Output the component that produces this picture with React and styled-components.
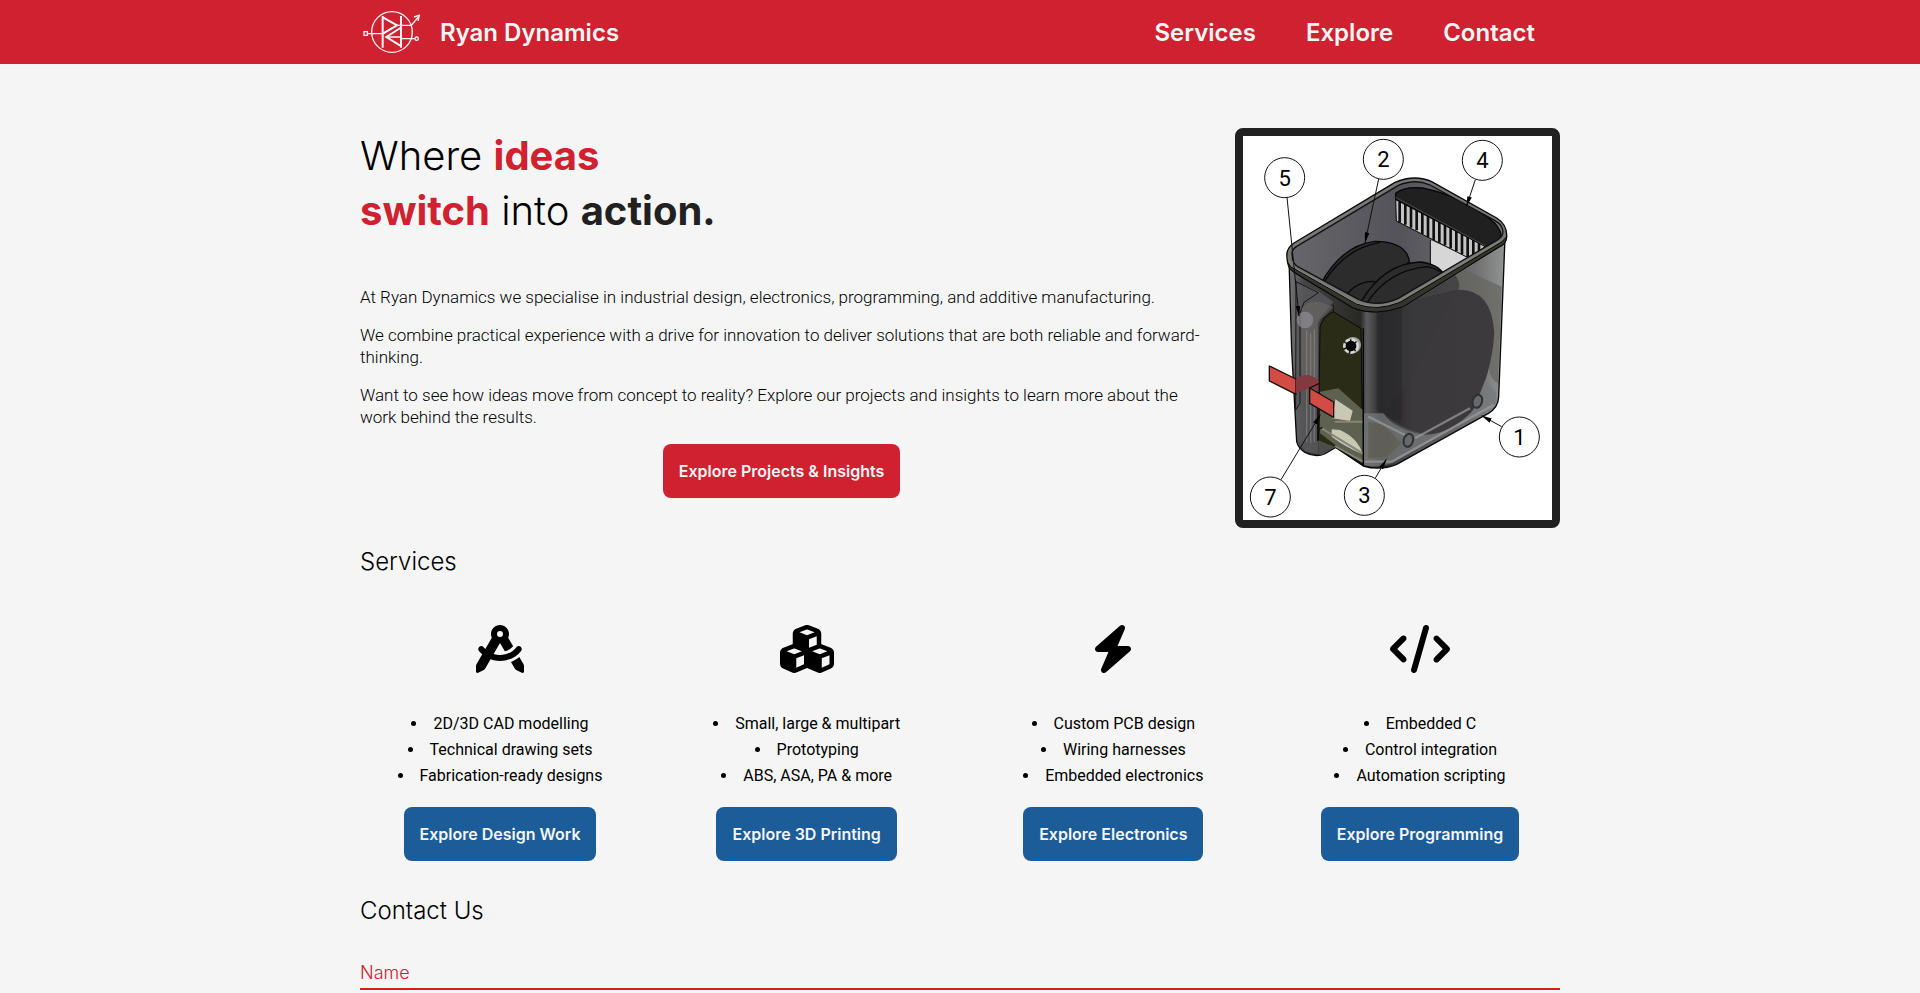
import React from "react";
import styled, { createGlobalStyle } from "styled-components";
import { FaCompassDrafting, FaCubes, FaBolt, FaCode } from "react-icons/fa6";

const GlobalStyle = createGlobalStyle`
  * { box-sizing: border-box; }
  body {
    margin: 0;
    background: #f5f5f5;
    color: #000;
    font-family: Inter, "Liberation Sans", sans-serif;
    font-size: 16px;
    line-height: 22px;
  }
`;

const Header = styled.header`
  background: #cf2130;
`;

const Container = styled.div`
  width: 100%;
  max-width: 1200px;
  margin: 0 auto;
`;

const Bar = styled(Container)`
  display: flex;
  align-items: center;
  justify-content: space-between;
  height: 64px;
`;

const Brand = styled.a`
  display: flex;
  align-items: center;
  gap: 16px;
  color: #f5f5f5;
  font-size: 24px;
  font-weight: 600;
  line-height: 35px;
  text-decoration: none;
`;

const Nav = styled.nav`
  display: flex;
`;

const NavLink = styled.a`
  padding: 0 25px;
  color: #f5f5f5;
  font-size: 24px;
  font-weight: 600;
  line-height: 35px;
  text-decoration: none;
`;

const Hero = styled.section`
  display: flex;
  gap: 32px;
  margin-top: 64px;
`;

const HeroText = styled.div`
  display: flex;
  flex: 1;
  flex-direction: column;
`;

const Title = styled.h1`
  margin: 0 0 48px;
  font-size: 40px;
  font-weight: 300;
  line-height: 55px;
`;

const Strong = styled.strong`
  color: ${(p) => (p.$red ? "#cf2130" : "#212121")};
  font-weight: 700;
`;

const Paragraph = styled.p`
  margin: 0 0 16px;
  font-family: Roboto, Inter, sans-serif;
  font-size: 17px;
  font-weight: 300;
`;

const ActionLink = styled.a`
  align-self: center;
  padding: 16px;
  border-radius: 8px;
  background: ${(p) => (p.$red ? "#cf2130" : "#1c5c99")};
  color: #f5f5f5;
  font-weight: 600;
  text-decoration: none;
`;

const Picture = styled.div`
  width: 325px;
  height: 400px;
  border: 8px solid #212121;
  border-radius: 8px;
  background: #fff;

  svg {
    display: block;
    width: 100%;
    height: 100%;
  }
`;

const Heading = styled.h2`
  margin: ${(p) => p.$top}px 0 0;
  font-size: 24px;
  font-weight: 300;
  line-height: 35px;
`;

const Services = styled.section`
  display: flex;
  justify-content: space-between;
  margin-top: 46px;
`;

const Service = styled.article`
  display: flex;
  flex-direction: column;
  align-items: center;
  width: 280px;

  > svg {
    width: 60px;
    height: 48px;
  }
`;

const List = styled.ul`
  width: 100%;
  margin: 40px 0 16px;
  padding: 0;
  font-family: Roboto, Inter, sans-serif;
  list-style-position: inside;
  text-align: center;
`;

const Item = styled.li`
  padding-bottom: 4px;
`;

const Form = styled.form`
  margin-top: 30px;
`;

const Field = styled.input`
  display: block;
  width: 100%;
  height: 32px;
  padding: 0 0 2px;
  border: 0;
  border-bottom: 2px solid #d81e1a;
  background: transparent;
  color: #212121;
  font: inherit;
  font-size: 18px;
  font-weight: 300;

  &::placeholder {
    color: #cf2130;
    opacity: 1;
  }
`;

const Logo = () => (
  <svg width="64" height="48" viewBox="0 0 192 144" fill="none" stroke="#f5f5f5" aria-hidden="true">
    <circle cx="96" cy="72" r="61" strokeWidth="4" />
    <path d="M68 24V119M123 24V119M70 29L111 52L70 76M121 60L79 87L121 113" strokeWidth="6" />
    <path d="M12 71h10v11H12zM23 77H68M111 52H154L175 27M123 92H164M70 76L96 60M79 87H121" strokeWidth="4" />
    <path d="M162 27L178 22L174 39" strokeWidth="4" />
    <circle cx="170" cy="92" r="5" strokeWidth="4" />
  </svg>
);

const balloons = [
  { n: 5, x: 179, y: 173, from: [186, 232], to: [222, 588] },
  { n: 2, x: 475, y: 118, from: [461, 177], to: [420, 368] },
  { n: 4, x: 772, y: 121, from: [751, 179], to: [724, 260] },
  { n: 1, x: 883, y: 951, from: [830, 920], to: [770, 887] },
  { n: 3, x: 418, y: 1126, from: [450, 1076], to: [484, 1018] },
  { n: 7, x: 136, y: 1131, from: [168, 1079], to: [286, 884] },
];

const Dryer = () => (
  <svg viewBox="54 48 927 1152" role="img" aria-label="Numbered drawing of a filament dry box" strokeLinejoin="round">
    <defs>
      <linearGradient id="wall" x1="0" x2="1">
        <stop offset="0" stopColor="#777779" />
        <stop offset="0.07" stopColor="#444346" />
        <stop offset="0.33" stopColor="#282824" />
        <stop offset="0.36" stopColor="#5b5a5d" />
        <stop offset="0.43" stopColor="#29282b" />
        <stop offset="0.5" stopColor="#454448" />
        <stop offset="0.86" stopColor="#6f6f70" />
        <stop offset="1" stopColor="#929393" />
      </linearGradient>
      <linearGradient id="inside" x1="0" x2="1">
        <stop offset="0" stopColor="#66666b" />
        <stop offset="0.5" stopColor="#535359" />
        <stop offset="1" stopColor="#77777b" />
      </linearGradient>
      <linearGradient id="spool" x1="0" x2="1">
        <stop offset="0" stopColor="#252428" />
        <stop offset="0.25" stopColor="#3b393c" />
        <stop offset="1" stopColor="#3c3a3d" />
      </linearGradient>
      <marker id="arrow" viewBox="0 0 32 14" refX="31" refY="7" markerWidth="32" markerHeight="14" markerUnits="userSpaceOnUse" orient="auto">
        <path d="M0 0L32 7L0 14Z" />
      </marker>
      <clipPath id="opening">
        <path d="M201 400Q201 386 220 376L520 196Q570 175 615 195L810 302Q840 320 832 345Q828 356 800 370L520 535Q460 563 400 538L218 440Q201 430 201 400Z" />
      </clipPath>
    </defs>

    <path d="M192 420L200 690L215 965Q220 985 240 997Q272 1014 300 1001L332 982L415 1038Q465 1053 515 1033L790 880Q820 862 821 830L840 355L500 330Z" fill="url(#wall)" stroke="#080808" strokeWidth="4" />
    <path d="M640 480L700 440L830 500L819 790Q780 770 795 690Q840 560 640 480Z" fill="#64645f" opacity="0.7" />
    <path d="M480 560L690 510Q800 500 808 640Q800 760 745 870Q680 950 600 943Q520 925 480 880Z" fill="url(#spool)" />
    <path d="M480 545L680 450Q720 500 690 520L600 700L480 880Z" fill="#39373a" opacity="0.7" />
    <path d="M455 560L530 560L530 905L455 870Z" fill="#29282b" opacity="0.75" />
    <path d="M416 880L475 880Q510 930 600 945Q680 940 745 870L780 780L812 815L815 850L500 1030Q460 1045 416 1035Z" fill="#77787a" opacity="0.75" />
    <path d="M430 905L475 915L530 970L485 1010L430 1015Z" fill="#5d5c50" opacity="0.7" />
    <path d="M430 890L540 945M570 955L735 865M420 1025L500 1025L805 855" fill="none" stroke="#9b9c9b" strokeWidth="7" opacity="0.7" />

    <path d="M280 1000L285 620Q295 587 325 575L408 625L414 1035L332 982Z" fill="#2a2c17" stroke="#0a0a08" strokeWidth="3" />
    <path d="M215 485L275 510L325 545L280 600L278 960L332 982L290 1005L240 994L218 950Z" fill="#5b5b5e" opacity="0.72" />
    <path d="M213 485L280 518L237 547L225 580V850L212 870ZM325 555V575L285 600" fill="none" stroke="#151515" strokeWidth="3" />
    <path d="M230 565Q250 540 285 545L325 560L278 610L278 780L230 770Z" fill="#706b66" opacity="0.5" />
    <path d="M245 630V965M257 640V970M268 630V965" stroke="#8d8d91" strokeWidth="4" opacity="0.55" />
    <circle cx="240" cy="600" r="25" fill="#8b8c91" opacity="0.7" />
    <path d="M285 815L340 805L413 870V1028L335 978L285 940Z" fill="#5f6150" />
    <path d="M331 838L383 872L375 903L322 895ZM320 928L345 930Q400 955 413 1003Q360 980 320 950Z" fill="#c8c8b5" />
    <path d="M290 925L413 1000M330 905L413 905M330 978L414 1025" stroke="#85867a" strokeWidth="6" fill="none" />
    <path d="M278 840V963M278 930L292 922" stroke="#111" strokeWidth="4" />
    <path d="M415 625V1035" stroke="#080808" strokeWidth="4" />

    <g stroke="#16100f" strokeWidth="4">
      <path d="M133 738L213 777V823L133 783Z" fill="#d24b45" />
      <path d="M213 777Q245 752 280 780L283 812L254 804L213 820Z" fill="#823a40" stroke="none" />
      <path d="M254 804L326 846V892L254 850Z" fill="#d24b45" />
      <path d="M254 804L283 790V812" fill="none" />
    </g>
    <circle cx="384" cy="675" r="24" fill="#a0a09e" />
    <circle cx="378" cy="678" r="20" fill="#080808" stroke="#d7d7d7" strokeWidth="8" strokeDasharray="14 5" />
    <g fill="#68696c" stroke="#303033" strokeWidth="6">
      <ellipse cx="550" cy="961" rx="14" ry="20" transform="rotate(18 550 961)" />
      <ellipse cx="757" cy="844" rx="14" ry="20" transform="rotate(18 757 844)" />
    </g>

    <path d="M186 414Q182 385 207 369L510 187Q570 162 620 185L815 294Q847 314 845 350Q845 370 820 382L535 557Q450 590 385 564L208 457Q187 443 186 414Z" fill="#777875" stroke="#080808" strokeWidth="4" />
    <path d="M190 430Q194 443 215 450L395 552Q455 575 525 547L830 366L845 350Q845 372 820 382L535 560Q450 590 385 564L208 457Q187 443 190 430Z" fill="#35352f" stroke="#080808" strokeWidth="3" />
    <g clipPath="url(#opening)">
      <rect x="190" y="170" width="660" height="400" fill="url(#inside)" />
      <path d="M616 360L735 414L620 490Z" fill="#d5d6d5" />
      <path d="M616 360V440" stroke="#111" strokeWidth="3" />
      <g fill="#2d2c2d" stroke="#080808" strokeWidth="4">
        <path d="M285 495Q350 375 450 364Q545 365 553 425L400 560Z" />
        <path d="M298 485Q360 385 465 368" fill="none" />
        <path d="M355 540Q385 485 445 484L520 520L430 570Z" />
        <path d="M405 550Q475 430 585 426Q690 435 675 570L405 590Z" />
        <path d="M425 550Q490 450 607 440Q700 460 690 580" />
      </g>
      <path d="M512 233L782 378L735 416L514 303Z" fill="#c4c4c4" stroke="#080808" strokeWidth="3" />
      <path d="M524 245V308M541 252V314M558 260V323M575 268V331M592 277V342M609 285V351M626 294V360M643 302V368M660 310V376M677 318V385M694 330V394M711 338V403M728 347V412M745 357V410M762 366V398" stroke="#101010" strokeWidth="8" />
      <path d="M512 220Q540 198 592 204Q720 230 810 310Q840 345 820 365L782 380L512 238Z" fill="#202020" stroke="#080808" strokeWidth="4" />
      <path d="M512 232L780 377" stroke="#4c4c4c" strokeWidth="3" />
    </g>
    <path d="M201 400Q201 386 220 376L520 196Q570 175 615 195L810 302Q840 320 832 345Q828 356 800 370L520 535Q460 563 400 538L218 440Q201 430 201 400Z" fill="none" stroke="#111" strokeWidth="4" />
    <path d="M215 447L395 549Q455 570 520 544L825 362" fill="none" stroke="#83837b" strokeWidth="3" />

    <g fontFamily="Roboto, sans-serif" fontSize="66" textAnchor="middle">
      {balloons.map((b) => (
        <g key={b.n}>
          <line x1={b.from[0]} y1={b.from[1]} x2={b.to[0]} y2={b.to[1]} stroke="#111" strokeWidth="3" markerEnd="url(#arrow)" />
          <circle cx={b.x} cy={b.y} r="60" fill="#fff" stroke="#111" strokeWidth="3" />
          <text x={b.x} y={b.y + 24}>{b.n}</text>
        </g>
      ))}
    </g>
  </svg>
);

const services = [
  { icon: FaCompassDrafting, items: ["2D/3D CAD modelling", "Technical drawing sets", "Fabrication-ready designs"], action: "Explore Design Work" },
  { icon: FaCubes, items: ["Small, large & multipart", "Prototyping", "ABS, ASA, PA & more"], action: "Explore 3D Printing" },
  { icon: FaBolt, items: ["Custom PCB design", "Wiring harnesses", "Embedded electronics"], action: "Explore Electronics" },
  { icon: FaCode, items: ["Embedded C", "Control integration", "Automation scripting"], action: "Explore Programming" },
];

export default function App() {
  return (
    <>
      <GlobalStyle />
      <Header>
        <Bar>
          <Brand href="#home">
            <Logo />
            Ryan Dynamics
          </Brand>
          <Nav>
            <NavLink href="#services">Services</NavLink>
            <NavLink href="#explore">Explore</NavLink>
            <NavLink href="#contact">Contact</NavLink>
          </Nav>
        </Bar>
      </Header>
      <Container as="main">
        <Hero>
          <HeroText>
            <Title>
              Where <Strong $red>ideas</Strong>
              <br />
              <Strong $red>switch</Strong> into <Strong>action.</Strong>
            </Title>
            <Paragraph>
              At Ryan Dynamics we specialise in industrial design, electronics, programming, and additive manufacturing.
            </Paragraph>
            <Paragraph>
              We combine practical experience with a drive for innovation to deliver solutions that are both reliable and forward-thinking.
            </Paragraph>
            <Paragraph>
              Want to see how ideas move from concept to reality? Explore our projects and insights to learn more about the work behind the results.
            </Paragraph>
            <ActionLink $red href="#explore">Explore Projects &amp; Insights</ActionLink>
          </HeroText>
          <Picture>
            <Dryer />
          </Picture>
        </Hero>
        <Heading id="services" $top={16}>Services</Heading>
        <Services>
          {services.map(({ icon: Icon, items, action }) => (
            <Service key={action}>
              <Icon aria-hidden="true" />
              <List>
                {items.map((item) => (
                  <Item key={item}>{item}</Item>
                ))}
              </List>
              <ActionLink href="#explore">{action}</ActionLink>
            </Service>
          ))}
        </Services>
        <Heading id="contact" $top={32}>Contact Us</Heading>
        <Form>
          <Field type="text" name="name" placeholder="Name" aria-label="Name" />
        </Form>
      </Container>
    </>
  );
}
